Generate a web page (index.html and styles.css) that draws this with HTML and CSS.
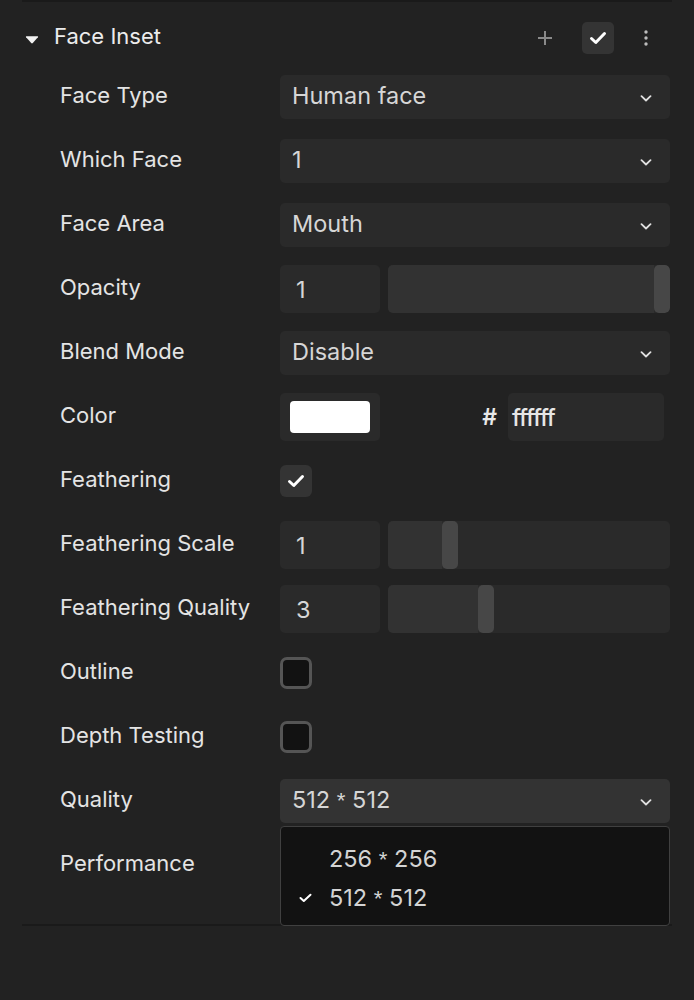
FILE: index.html
```html
<!DOCTYPE html>
<html>
<head>
<meta charset="utf-8">
<link rel="stylesheet" href="styles.css">
</head>
<body>
<div class="panel">
  <div class="topline"></div>
  <div class="header">
    <svg class="caret" width="14" height="9" viewBox="0 0 14 9"><path d="M1.5 1.2 H12.5 Q13.6 1.2 12.9 2.2 L7.8 8 Q7 8.8 6.2 8 L1.1 2.2 Q0.4 1.2 1.5 1.2 Z" fill="#f2f2f2"/></svg>
    <span class="title">Face Inset</span>
    <div class="tools">
      <svg class="plus" width="16" height="16" viewBox="0 0 16 16"><path d="M8 1 V15 M1 8 H15" stroke="#8a8a8a" stroke-width="2"/></svg>
      <div class="toggle"><svg width="18" height="14" viewBox="0 0 18 14"><path d="M2.5 7.5 L6.8 11.5 L15.5 2.5" fill="none" stroke="#fff" stroke-width="3" stroke-linecap="round" stroke-linejoin="round"/></svg></div>
      <svg class="kebab" width="6" height="18" viewBox="0 0 6 18"><circle cx="3" cy="3" r="1.7" fill="#bdbdbd"/><circle cx="3" cy="9" r="1.7" fill="#bdbdbd"/><circle cx="3" cy="15" r="1.7" fill="#bdbdbd"/></svg>
    </div>
  </div>

  <div class="row"><div class="label">Face Type</div><div class="ctrl"><div class="select"><span>Human face</span><svg class="chev" width="12" height="7" viewBox="0 0 12 7"><path d="M1.5 1.2 L6 5.5 L10.5 1.2" fill="none" stroke="#e0e0e0" stroke-width="1.8" stroke-linecap="round" stroke-linejoin="round"/></svg></div></div></div>

  <div class="row"><div class="label">Which Face</div><div class="ctrl"><div class="select"><span>1</span><svg class="chev" width="12" height="7" viewBox="0 0 12 7"><path d="M1.5 1.2 L6 5.5 L10.5 1.2" fill="none" stroke="#e0e0e0" stroke-width="1.8" stroke-linecap="round" stroke-linejoin="round"/></svg></div></div></div>

  <div class="row"><div class="label">Face Area</div><div class="ctrl"><div class="select"><span>Mouth</span><svg class="chev" width="12" height="7" viewBox="0 0 12 7"><path d="M1.5 1.2 L6 5.5 L10.5 1.2" fill="none" stroke="#e0e0e0" stroke-width="1.8" stroke-linecap="round" stroke-linejoin="round"/></svg></div></div></div>

  <div class="row"><div class="label">Opacity</div><div class="ctrl slidectrl"><div class="num">1</div><div class="slider"><div class="fill" style="width:calc(100% - 16px)"></div><div class="handle"></div><div class="rest"></div></div></div></div>

  <div class="row"><div class="label">Blend Mode</div><div class="ctrl"><div class="select"><span>Disable</span><svg class="chev" width="12" height="7" viewBox="0 0 12 7"><path d="M1.5 1.2 L6 5.5 L10.5 1.2" fill="none" stroke="#e0e0e0" stroke-width="1.8" stroke-linecap="round" stroke-linejoin="round"/></svg></div></div></div>

  <div class="row"><div class="label">Color</div><div class="ctrl colorctrl"><div class="swatchbox"><div class="swatch"></div></div><div class="hash">#</div><div class="hex">ffffff</div></div></div>

  <div class="row"><div class="label">Feathering</div><div class="ctrl"><div class="check on"><svg width="18" height="14" viewBox="0 0 18 14"><path d="M2.5 7.5 L6.8 11.5 L15.5 2.5" fill="none" stroke="#fff" stroke-width="3" stroke-linecap="round" stroke-linejoin="round"/></svg></div></div></div>

  <div class="row"><div class="label">Feathering Scale</div><div class="ctrl slidectrl"><div class="num">1</div><div class="slider"><div class="fill" style="width:54px"></div><div class="handle"></div><div class="rest"></div></div></div></div>

  <div class="row"><div class="label">Feathering Quality</div><div class="ctrl slidectrl"><div class="num">3</div><div class="slider"><div class="fill" style="width:90px"></div><div class="handle"></div><div class="rest"></div></div></div></div>

  <div class="row"><div class="label">Outline</div><div class="ctrl"><div class="check off"></div></div></div>

  <div class="row"><div class="label">Depth Testing</div><div class="ctrl"><div class="check off"></div></div></div>

  <div class="row"><div class="label">Quality</div><div class="ctrl quality"><div class="select open"><span>512 <span class="ast">*</span> 512</span><svg class="chev" width="12" height="7" viewBox="0 0 12 7"><path d="M1.5 1.2 L6 5.5 L10.5 1.2" fill="none" stroke="#e0e0e0" stroke-width="1.8" stroke-linecap="round" stroke-linejoin="round"/></svg></div>
    <div class="menu">
      <div class="item"><span class="mark"></span><span>256 <span class="ast">*</span> 256</span></div>
      <div class="item"><span class="mark"><svg width="13" height="10" viewBox="0 0 13 10"><path d="M1.5 5 L4.8 8 L11.5 1.8" fill="none" stroke="#fff" stroke-width="2" stroke-linecap="round" stroke-linejoin="round"/></svg></span><span>512 <span class="ast">*</span> 512</span></div>
    </div>
  </div></div>

  <div class="row"><div class="label">Performance</div><div class="ctrl"></div></div>

  <div class="bottomspace"></div>
  <div class="bottomline"></div>
</div>
</body>
</html>
```
FILE: styles.css
```css
html, body {
  margin: 0;
  padding: 0;
  background: #222222;
}
body {
  font-family: Inter, "Noto Sans", sans-serif;
  color: #e2e2e2;
  width: 694px;
  height: 1000px;
  overflow: hidden;
}
.panel {
  padding: 0 22px;
}
.topline {
  height: 2px;
  background: #1a1a1a;
}
.header {
  display: flex;
  align-items: center;
  height: 32px;
  padding: 20px 0 11px 0;
}
.caret {
  margin-left: 3px;
  margin-top: 3px;
}
.title {
  margin-left: 15px;
  font-size: 22px;
  color: #ececec;
  margin-top: -4px;
}
.tools {
  margin-left: auto;
  display: flex;
  align-items: center;
}
.plus {
  margin-right: 29px;
}
.toggle {
  width: 32px;
  height: 32px;
  border-radius: 5px;
  background: #343434;
  display: flex;
  align-items: center;
  justify-content: center;
}
.kebab {
  margin-left: 29px;
  margin-right: 23px;
}
.row {
  display: grid;
  grid-template-columns: 258px 1fr;
  height: 64px;
  align-items: center;
}
.label {
  padding-left: 38px;
  font-size: 22px;
  color: #e4e4e4;
  margin-top: -5px;
}
.ctrl {
  margin-right: 2px;
  position: relative;
}
.select {
  height: 44px;
  background: #2a2a2a;
  border-radius: 5px;
  display: flex;
  align-items: center;
  padding: 0 18px 0 12px;
  font-size: 23.5px;
  color: #d6d6d6;
}
.select > span {
  margin-top: -3px;
}
.select.open {
  background: #333333;
}
.ast {
  font-family: "Liberation Sans", Arial, sans-serif;
  font-size: 0.95em;
}
.chev {
  margin-left: auto;
  margin-top: 2px;
}
.slidectrl {
  display: flex;
  gap: 8px;
  height: 48px;
}
.num {
  width: 100px;
  box-sizing: border-box;
  background: #2a2a2a;
  border-radius: 5px;
  padding-left: 16px;
  font-size: 23.5px;
  color: #d6d6d6;
  display: flex;
  align-items: center;
}
.slider {
  flex: 1;
  display: flex;
  border-radius: 5px;
  overflow: hidden;
  background: #2a2a2a;
}
.fill {
  background: #323232;
  flex: none;
}
.handle {
  width: 16px;
  background: #474747;
  border-radius: 5px;
  flex: none;
}
.rest {
  flex: 1;
}
.colorctrl {
  display: flex;
  align-items: center;
  height: 48px;
  margin-right: 8px;
}
.swatchbox {
  width: 100px;
  height: 48px;
  background: #2a2a2a;
  border-radius: 5px;
  display: flex;
  align-items: center;
  justify-content: center;
}
.swatch {
  width: 80px;
  height: 32px;
  background: #ffffff;
  border-radius: 4px;
}
.hash {
  margin-left: auto;
  margin-right: 11px;
  font-size: 23px;
  font-weight: 600;
  color: #e8e8e8;
}
.hex {
  width: 156px;
  height: 48px;
  box-sizing: border-box;
  background: #2a2a2a;
  border-radius: 5px;
  padding-left: 4px;
  font-size: 23.5px;
  font-weight: 500;
  letter-spacing: -1px;
  color: #e6e6e6;
  display: flex;
  align-items: center;
}
.check {
  width: 32px;
  height: 32px;
  box-sizing: border-box;
  border-radius: 6px;
  display: flex;
  align-items: center;
  justify-content: center;
}
.check.on {
  background: #343434;
}
.check.off {
  background: #121212;
  border: 3px solid #555555;
  border-radius: 7px;
}
.menu {
  position: absolute;
  left: 0;
  right: 0;
  top: 47px;
  height: 100px;
  box-sizing: border-box;
  background: #121212;
  border: 1.5px solid #404040;
  border-radius: 4px;
  padding-top: 12px;
  z-index: 2;
}
.item {
  display: flex;
  align-items: center;
  height: 39px;
  font-size: 23.5px;
  color: #d4d4d4;
}
.mark {
  width: 48px;
  padding-left: 18px;
  box-sizing: border-box;
  display: flex;
  align-items: center;
}
.bottomspace {
  height: 27px;
}
.bottomline {
  height: 2px;
  background: #1a1a1a;
}
```
